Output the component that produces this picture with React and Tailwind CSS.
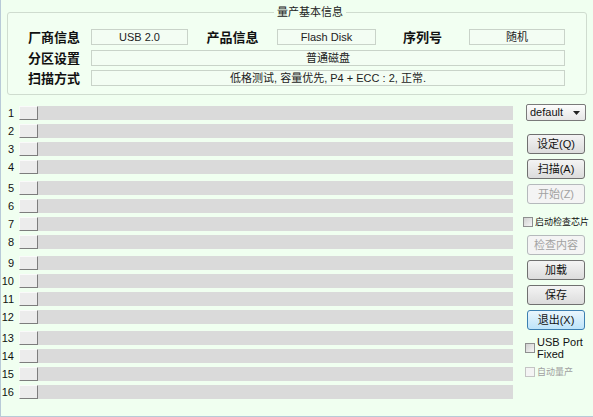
const font = { fontFamily: '"Liberation Sans", "Noto Sans CJK SC", sans-serif' };

const groups = [
  [1, 2, 3, 4],
  [5, 6, 7, 8],
  [9, 10, 11, 12],
  [13, 14, 15, 16],
];

function Field({ w, children }) {
  return (
    <div className={`${w} h-[16px] border border-[#c9d3c9] bg-[#f3fdf3] flex items-center justify-center text-[11px] text-[#222] leading-none`}>
      {children}
    </div>
  );
}

function Label({ w, center, children }) {
  return (
    <div className={`${w} text-[13px] font-bold text-[#111] leading-none ${center ? 'text-center' : ''}`}>
      {children}
    </div>
  );
}

function Btn({ children, disabled, focused, className = '' }) {
  let look = 'border-[#707070] bg-gradient-to-b from-[#f4f4f4] to-[#dcdcdc] text-[#111]';
  if (disabled) look = 'border-[#b5b9bc] bg-[#f4f4f4] text-[#a2a2a2]';
  if (focused) look = 'border-[#3c7fb1] bg-gradient-to-b from-[#eaf6fd] to-[#bde4fa] text-[#111]';
  return (
    <div className={`w-[58px] h-[20px] ml-[1px] border rounded-[3px] flex items-center justify-center text-[11px] leading-none whitespace-nowrap ${look} ${className}`}>
      {children}
    </div>
  );
}

function Check({ disabled, children, className = '' }) {
  return (
    <div className={`flex items-center gap-[2px] h-[13px] whitespace-nowrap ${className}`}>
      <div className={`w-[10px] h-[10px] shrink-0 border ${disabled ? 'border-[#c4c4c4] bg-[#f4f4f4]' : 'border-[#8e8f8f] bg-gradient-to-br from-[#d0d0d0] to-[#f6f6f6]'}`} />
      <div className={`text-[9px] leading-[12px] ${disabled ? 'text-[#a0a0a0]' : 'text-[#111]'}`}>{children}</div>
    </div>
  );
}

export default function App() {
  return (
    <div style={font} className="w-[593px] h-[417px] bg-[#f0fff0] border-l border-b border-[#b8cad8] overflow-hidden">
      {/* 量产基本信息 */}
      <div className="relative mt-[12px] ml-[6px] w-[580px] h-[83px] border border-[#cfdccf] rounded-[3px] bg-[#f2fff2] pt-[16px] pl-[20px]">
        <div className="absolute -top-[7px] left-[266px] px-[3px] bg-[#f0fff0] text-[11px] leading-[12px] text-[#222]">量产基本信息</div>
        <div className="flex items-center">
          <Label w="w-[63px]">厂商信息</Label>
          <Field w="w-[97px]">USB 2.0</Field>
          <Label w="w-[89px]" center>产品信息</Label>
          <Field w="w-[99px]">Flash Disk</Field>
          <Label w="w-[93px]" center>序列号</Label>
          <Field w="w-[96px]">随机</Field>
        </div>
        <div className="flex items-center mt-[5px]">
          <Label w="w-[63px]">分区设置</Label>
          <Field w="w-[474px]">普通磁盘</Field>
        </div>
        <div className="flex items-center mt-[4px]">
          <Label w="w-[63px]">扫描方式</Label>
          <Field w="w-[474px]">低格测试, 容量优先, P4 + ECC : 2, 正常.</Field>
        </div>
      </div>

      <div className="flex mt-[11px]">
        {/* ports */}
        <div className="flex flex-col gap-[7px]">
          {groups.map((g, gi) => (
            <div key={gi} className="flex flex-col gap-[4px]">
              {g.map((n) => (
                <div key={n} className="flex items-center h-[14px]">
                  <div className="w-[13px] text-right text-[11px] leading-none text-[#111]">{n}</div>
                  <div className="ml-[5px] w-[19px] h-[14px] bg-[#ececec] border-t border-l border-[#fafafa] border-r-[#7d7d7d] border-b-[#7d7d7d] border-r border-b" />
                  <div className="w-[475px] h-[14px] bg-[#dadada]" />
                </div>
              ))}
            </div>
          ))}
        </div>

        {/* right side */}
        <div className="ml-[13px] w-[62px] flex flex-col">
          <div className="mt-[-2px] w-[60px] h-[17px] border border-[#7a7a7a] rounded-[2px] bg-gradient-to-b from-[#fdfdfd] to-[#e6e6e6] flex items-center justify-between pl-[3px] pr-[5px]">
            <span className="text-[11px] leading-none text-[#111]">default</span>
            <svg width="7" height="4" viewBox="0 0 7 4"><path d="M0 0h7L3.5 4z" fill="#222" /></svg>
          </div>
          <Btn className="mt-[13px]">设定(Q)</Btn>
          <Btn className="mt-[5px]">扫描(A)</Btn>
          <Btn className="mt-[5px]" disabled>开始(Z)</Btn>
          <Check className="mt-[11px] -ml-[3px]">启动检查芯片</Check>
          <Btn className="mt-[7px]" disabled>检查内容</Btn>
          <Btn className="mt-[5px]">加载</Btn>
          <Btn className="mt-[5px]">保存</Btn>
          <Btn className="mt-[5px]" focused>退出(X)</Btn>
          <div className="flex items-center gap-[2px] mt-[6px] -ml-[1px]">
            <div className="w-[10px] h-[10px] shrink-0 border border-[#8e8f8f] bg-gradient-to-br from-[#d0d0d0] to-[#f6f6f6]" />
            <div className="text-[11px] leading-[12px] text-[#111]">USB Port<br />Fixed</div>
          </div>
          <Check className="mt-[5px] -ml-[1px]" disabled>自动量产</Check>
        </div>
      </div>
    </div>
  );
}
